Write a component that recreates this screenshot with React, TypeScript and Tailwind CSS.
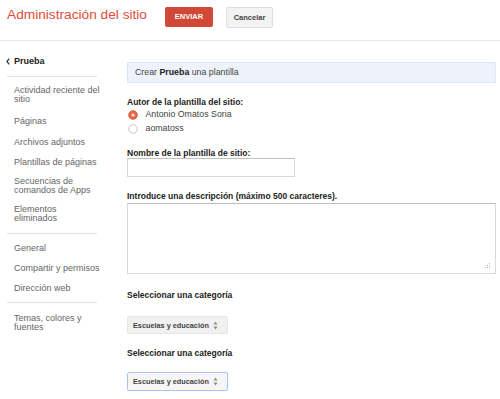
import React from 'react';

const font = { fontFamily: '"Liberation Sans", Arial, sans-serif' };

// spacing before each entry, measured from the reference
const navTop = [
  { label: 'Actividad reciente del sitio', mt: 'mt-0' },
  { label: 'Páginas', mt: 'mt-[13px]' },
  { label: 'Archivos adjuntos', mt: 'mt-[12px]' },
  { label: 'Plantillas de páginas', mt: 'mt-[11px]' },
  { label: 'Secuencias de comandos de Apps', mt: 'mt-[10px]' },
  { label: 'Elementos eliminados', mt: 'mt-[10px]' },
];
const navMid = ['General', 'Compartir y permisos', 'Dirección web'];

const Radio = ({ checked }: { checked?: boolean }) => (
  <svg width="10" height="10" viewBox="0 0 10 10" className="shrink-0">
    {checked ? (
      <>
        <circle cx="5" cy="5" r="4.3" fill="#e8694a" stroke="#cf4a2f" strokeWidth="0.8" />
        <circle cx="5" cy="5" r="1.6" fill="#fbe3dc" />
      </>
    ) : (
      <circle cx="5" cy="5" r="4.3" fill="#fff" stroke="#b9b9b9" strokeWidth="0.8" />
    )}
  </svg>
);

const Arrows = () => (
  <svg width="5" height="9" viewBox="0 0 5 9">
    <path d="M2.5 0.5 L4.5 3.5 L0.5 3.5 Z" fill="#8a8a8a" />
    <path d="M2.5 8.5 L4.5 5.5 L0.5 5.5 Z" fill="#8a8a8a" />
  </svg>
);

const Select = ({ focused }: { focused?: boolean }) => (
  <div
    className={`w-[101px] flex items-center justify-between pl-[5px] pr-[9px] rounded-[2px] border ${
      focused ? 'h-[19px] border-[#a9c4f0] bg-[#f6f6f6]' : 'h-[18px] border-[#e6e6e6] bg-[#f1f1f1]'
    }`}
  >
    <span className="text-[7.3px] font-bold text-[#444] leading-[9px]">Escuelas y educación</span>
    <Arrows />
  </div>
);

export default function App() {
  return (
    <div className="w-[500px] h-[399px] bg-white overflow-hidden" style={font}>
      {/* Header */}
      <div className="h-[41px] border-b border-[#e8e8e8] flex items-start pt-[7px] pl-[7px]">
        <h1 className="text-[13.7px] leading-[16px] text-[#dd4b39] font-normal">Administración del sitio</h1>
        <button className="ml-[18px] w-[48px] h-[20px] bg-[#d14836] text-white text-[7.5px] font-bold rounded-[2px]">
          ENVIAR
        </button>
        <button className="ml-[13px] w-[47px] h-[21px] bg-[#f3f3f3] border border-[#dedede] text-[#444] text-[7.5px] font-bold rounded-[2px]">
          Cancelar
        </button>
      </div>

      <div className="flex">
        {/* Sidebar */}
        <div className="w-[127px] shrink-0 pl-[7px] pt-[15px]">
          <div className="flex items-center gap-[4px] leading-[10px] text-[9px] font-bold text-[#222]">
            <svg width="4" height="7" viewBox="0 0 4 7" className="-ml-[1px]">
              <path d="M3.3 0.6 L0.9 3.5 L3.3 6.4" fill="none" stroke="#333" strokeWidth="1.2" />
            </svg>
            Prueba
          </div>
          <div className="w-[90px] h-px bg-[#e3e3e3] mt-[10px]" />
          <div className="flex flex-col pl-[7px] mt-[8.5px] w-[94px] text-[9px] leading-[9px] text-[#666]">
            {navTop.map((n) => (
              <div key={n.label} className={n.mt}>
                {n.label}
              </div>
            ))}
          </div>
          <div className="w-[90px] h-px bg-[#e3e3e3] mt-[10px]" />
          <div className="flex flex-col gap-[11px] pl-[7px] mt-[10px] w-[94px] text-[9px] leading-[9px] text-[#666]">
            {navMid.map((t) => (
              <div key={t}>{t}</div>
            ))}
          </div>
          <div className="w-[90px] h-px bg-[#e3e3e3] mt-[9px]" />
          <div className="pl-[7px] mt-[11px] w-[94px] text-[9px] leading-[9px] text-[#666]">Temas, colores y fuentes</div>
        </div>

        {/* Main */}
        <div className="flex-1 pt-[21px] pr-[4px] text-[#333]">
          <div className="h-[21px] bg-[#eef3fb] border border-[#dce6f5] flex items-center pl-[7px] text-[8.8px] text-[#444]">
            <span>
              Crear <b className="text-[#222]">Prueba</b> una plantilla
            </span>
          </div>

          <div className="mt-[14px] text-[8.5px] leading-[10px] font-bold text-[#222]">Autor de la plantilla del sitio:</div>
          <div className="flex items-center gap-[8px] h-[14px] mt-[0.5px] pl-[0.5px] text-[8.8px] text-[#444]">
            <Radio checked />
            <span>Antonio Omatos Soria</span>
          </div>
          <div className="flex items-center gap-[8px] h-[14px] pl-[0.5px] text-[8.8px] text-[#444]">
            <Radio />
            <span>aomatoss</span>
          </div>

          <div className="mt-[12.5px] text-[8.5px] leading-[10px] font-bold text-[#222]">Nombre de la plantilla de sitio:</div>
          <div className="w-[168px] h-[19px] border border-[#d9d9d9] border-t-[#c0c0c0] bg-white" />

          <div className="mt-[14px] text-[8.5px] leading-[10px] font-bold text-[#222]">
            Introduce una descripción (máximo 500 caracteres).
          </div>
          <div className="relative mt-[2px] w-[369px] h-[71px] border border-[#d9d9d9] border-t-[#c0c0c0] bg-white">
            <svg width="6" height="6" viewBox="0 0 6 6" className="absolute right-[4px] bottom-[4px]">
              <rect x="4" y="0" width="1" height="1" fill="#bbb" />
              <rect x="2" y="2" width="1" height="1" fill="#bbb" />
              <rect x="4" y="2" width="1" height="1" fill="#bbb" />
              <rect x="0" y="4" width="1" height="1" fill="#bbb" />
              <rect x="2" y="4" width="1" height="1" fill="#bbb" />
              <rect x="4" y="4" width="1" height="1" fill="#bbb" />
            </svg>
          </div>

          <div className="mt-[16px] text-[8.5px] leading-[10px] font-bold text-[#222]">Seleccionar una categoría</div>
          <div className="mt-[16px]">
            <Select />
          </div>

          <div className="mt-[14px] text-[8.5px] leading-[10px] font-bold text-[#222]">Seleccionar una categoría</div>
          <div className="mt-[14px]">
            <Select focused />
          </div>
        </div>
      </div>
    </div>
  );
}
